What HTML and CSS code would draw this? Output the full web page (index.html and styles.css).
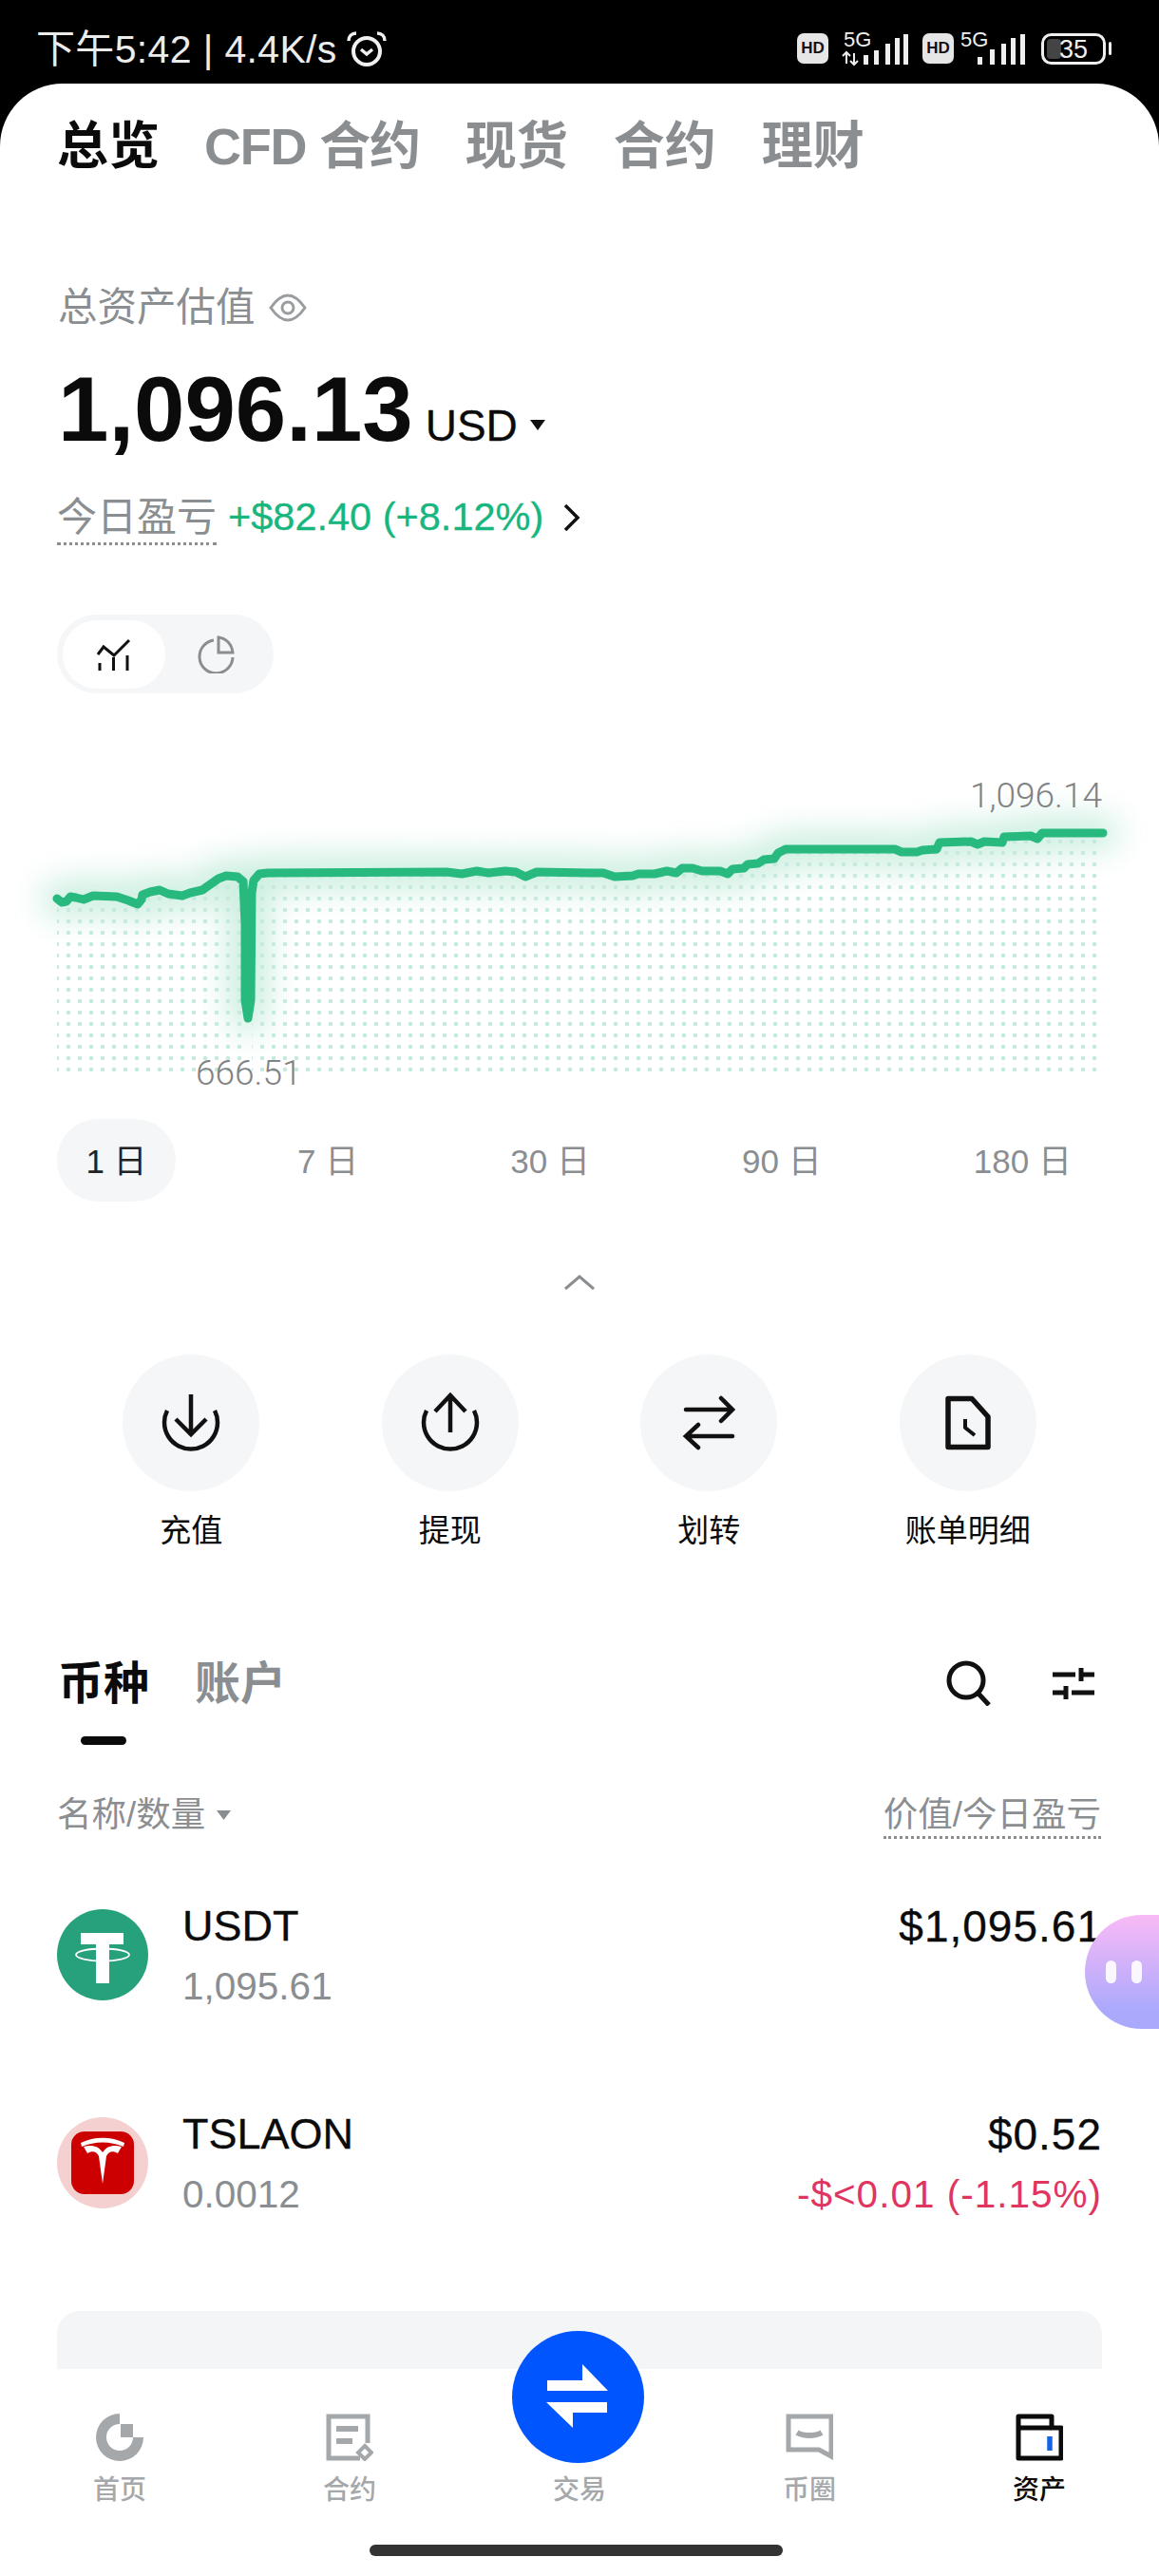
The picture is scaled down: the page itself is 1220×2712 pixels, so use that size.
FILE: index.html
```html
<!DOCTYPE html>
<html lang="zh-CN">
<head>
<meta charset="utf-8">
<title>资产</title>
<link rel="stylesheet" href="styles.css">
</head>
<body>
<header class="status">
  <div class="status-left">
    <span>下午5:42 | 4.4K/s</span>
    <svg class="alarm" viewBox="366 32 42 38" width="42" height="38" fill="none" stroke="#f0f0f0" stroke-width="4">
      <circle cx="387" cy="53" r="14"/>
      <path d="M381 51l6 5 6-5" stroke-width="3.5"/>
      <path d="M368 42c0-5 3-8 8-8M406 42c0-5-3-8-8-8" stroke-width="3.5"/>
    </svg>
  </div>
  <svg class="status-right" viewBox="830 25 350 50" width="350" height="50">
    <rect x="839" y="35" width="33" height="32" rx="7" fill="#e6e6e6"/>
    <text x="855.5" y="56" class="hd">HD</text>
    <text x="888" y="49" class="fiveg">5G</text>
    <path d="M891 56v11M887 59l4-4 4 4M899 67v-11M895 64l4 4 4-4" fill="none" stroke="#eee" stroke-width="2"/>
    <path d="M909 58h5v10h-5zM920 53h5v15h-5zM932 46h5v22h-5zM942 40h5v28h-5zM951 36h5v32h-5z" fill="#efefef"/>
    <rect x="971" y="35" width="33" height="32" rx="7" fill="#e6e6e6"/>
    <text x="987.5" y="56" class="hd">HD</text>
    <text x="1011" y="49" class="fiveg">5G</text>
    <path d="M1029 60h5v8h-5zM1042 52h5v16h-5zM1054 46h5v22h-5zM1064 40h5v28h-5zM1074 36h5v32h-5z" fill="#efefef"/>
    <rect x="1097.500" y="36.500" width="65" height="30" rx="9" fill="none" stroke="#efefef" stroke-width="3"/>
    <rect x="1102" y="41" width="15" height="21" rx="4" fill="#444"/>
    <text x="1130" y="61" class="batt">35</text>
    <rect x="1167" y="44" width="3" height="14" rx="1.500" fill="#efefef"/>
  </svg>
</header>

<main class="app">
  <nav class="tabs">
    <span class="tab tab-on">总览</span>
    <span class="tab tab-cfd">CFD 合约</span>
    <span class="tab">现货</span>
    <span class="tab">合约</span>
    <span class="tab">理财</span>
  </nav>

  <section class="summary">
    <div class="est">
      <span>总资产估值</span>
      <svg viewBox="0 0 40 30" width="40" height="30" fill="none" stroke="#9a9d9f" stroke-width="3">
        <path d="M2 15C9 5 14 2 20 2s11 3 18 13c-7 10-12 13-18 13S9 25 2 15z"/>
        <circle cx="20" cy="15" r="6"/>
      </svg>
    </div>
    <div class="total">
      <span class="total-num">1,096.13</span>
      <span class="total-cur">USD</span>
      <svg class="total-caret" viewBox="0 0 16 11" width="16" height="11"><path d="M0 0h16L8 11z" fill="#111"/></svg>
    </div>
    <div class="pnl">
      <span class="pnl-label">今日盈亏</span>
      <span class="pnl-val">+$82.40 (+8.12%)</span>
      <svg viewBox="0 0 18 28" width="18" height="28" fill="none" stroke="#111" stroke-width="3.500"><path d="M2 1l13 13L2 27"/></svg>
    </div>
  </section>

  <div class="toggle">
    <span class="toggle-on">
      <svg viewBox="0 0 36 34" width="36" height="34" fill="none" stroke="#111" stroke-width="3">
        <path d="M1 17l6-8 11 9L34 2"/>
        <path d="M3 26v8M17.500 20v14M32 18v16"/>
      </svg>
    </span>
    <span class="toggle-off">
      <svg viewBox="0 0 40 40" width="40" height="40" fill="none" stroke="#8b8e91" stroke-width="3">
        <path d="M18 5a17.500 17.500 0 1 0 20 18"/>
        <path d="M23 2c8 1 14 7 15 16H23z"/>
      </svg>
    </span>
  </div>

  <div class="chart">
    <svg class="chart-svg" viewBox="0 730 1220 448" width="1220" height="448">
      <defs>
        <pattern id="dots" patternUnits="userSpaceOnUse" x="54" y="928" width="12" height="12">
          <circle cx="6" cy="6" r="2.300" fill="#c6eadd"/>
        </pattern>
        <clipPath id="below">
          <path d="M60 946L98 943 145 952 158 939 213 937 250 923 256 928 258 1132H265L267 927 282 919 620 919 702 917 758 917 804 905 827 894 942 894 986 894 1022 886 1085 880 1097 877 1158 877V1132H60z"/>
        </clipPath>
        <filter id="blur" filterUnits="userSpaceOnUse" x="0" y="780" width="1220" height="380">
          <feGaussianBlur stdDeviation="17"/>
        </filter>
      </defs>
      <path class="line-glow" filter="url(#blur)" d="M60 946L65 950 70 949 74 944 80 945 88 947 98 943 123 944 135 948 145 952 149 947 150 942 158 939 168 937 177 941 192 943 200 940 213 937 220 932 230 925 238 922 250 923 256 928 258 973 258 1053 261 1072 264 1053 265 940 267 927 273 920 282 919 470 918 486 920 502 917 514 919 532 917 543 918 553 923 565 918 620 919 635 919 647 923 666 922 672 920 689 920 702 917 712 919 718 914 729 914 739 917 758 917 766 920 771 915 783 914 787 910 798 909 804 905 815 904 819 898 827 894 942 894 949 897 965 897 971 895 986 894 989 887 1022 886 1029 889 1036 886 1055 887 1057 881 1085 880 1092 883 1097 877 1161 877"/>
      <rect x="60" y="870" width="1100" height="265" fill="url(#dots)" clip-path="url(#below)"/>
      <path class="line" d="M60 946L65 950 70 949 74 944 80 945 88 947 98 943 123 944 135 948 145 952 149 947 150 942 158 939 168 937 177 941 192 943 200 940 213 937 220 932 230 925 238 922 250 923 256 928 258 973 258 1053 261 1072 264 1053 265 940 267 927 273 920 282 919 470 918 486 920 502 917 514 919 532 917 543 918 553 923 565 918 620 919 635 919 647 923 666 922 672 920 689 920 702 917 712 919 718 914 729 914 739 917 758 917 766 920 771 915 783 914 787 910 798 909 804 905 815 904 819 898 827 894 942 894 949 897 965 897 971 895 986 894 989 887 1022 886 1029 889 1036 886 1055 887 1057 881 1085 880 1092 883 1097 877 1161 877"/>
    </svg>
    <span class="chart-hi">1,096.14</span>
    <span class="chart-lo">666.51</span>
  </div>

  <div class="ranges">
    <span class="range range-on">1 日</span>
    <span class="range">7 日</span>
    <span class="range">30 日</span>
    <span class="range">90 日</span>
    <span class="range">180 日</span>
  </div>

  <div class="collapse">
    <svg viewBox="0 0 32 16" width="32" height="16" fill="none" stroke="#8b8e91" stroke-width="3"><path d="M1 15L16 2l15 13"/></svg>
  </div>

  <div class="actions">
    <div class="action">
      <span class="action-ic">
        <svg viewBox="0 0 64 64" width="64" height="64" fill="none" stroke="#111" stroke-width="4.500">
          <path d="M7 19A28 28 0 1 0 57 19"/>
          <path d="M32 2v40M16 28l16 16 16-16"/>
        </svg>
      </span>
      <span class="action-txt">充值</span>
    </div>
    <div class="action">
      <span class="action-ic">
        <svg viewBox="0 0 64 64" width="64" height="64" fill="none" stroke="#111" stroke-width="4.500">
          <path d="M7 19A28 28 0 1 0 57 19"/>
          <path d="M32 4v38M16 20L32 3l16 17"/>
        </svg>
      </span>
      <span class="action-txt">提现</span>
    </div>
    <div class="action">
      <span class="action-ic">
        <svg viewBox="0 0 64 64" width="64" height="64" fill="none" stroke="#111" stroke-width="4.500" stroke-linecap="round">
          <path d="M8 18h49M45 6l12 12-12 12"/>
          <path d="M57 46H9M21 34L8 46l13 12"/>
        </svg>
      </span>
      <span class="action-txt">划转</span>
    </div>
    <div class="action">
      <span class="action-ic">
        <svg viewBox="0 0 64 64" width="64" height="64" fill="none" stroke="#111" stroke-width="5.500" stroke-linejoin="round">
          <path d="M11 6.500h25l17 19v32H11z"/>
          <path d="M29 28v9l10 8" stroke-width="4"/>
        </svg>
      </span>
      <span class="action-txt">账单明细</span>
    </div>
  </div>

  <div class="coins-head">
    <div class="coin-tabs">
      <div class="coin-tab coin-tab-on">币种<i class="coin-bar"></i></div>
      <div class="coin-tab">账户</div>
    </div>
    <div class="coin-tools">
      <svg viewBox="0 0 48 48" width="48" height="48" fill="none" stroke="#111" stroke-width="5"><circle cx="21" cy="21" r="18"/><path d="M33 34l12 13"/></svg>
      <svg viewBox="0 0 46 36" width="46" height="36" fill="none" stroke="#111" stroke-width="5"><path d="M1 9h24M31 9h14M31 2v14M1 28h14M15 21v14M21 28h24"/></svg>
    </div>
  </div>

  <div class="tbl-head">
    <span class="tbl-sort">名称/数量<svg viewBox="0 0 15 10" width="15" height="10"><path d="M0 0h15L7.500 10z" fill="#8b8e91"/></svg></span>
    <span class="tbl-right">价值/今日盈亏</span>
  </div>

  <div class="rows">
    <div class="row">
      <svg class="coin-ic" viewBox="0 0 96 96" width="96" height="96">
        <circle cx="48" cy="48" r="48" fill="#27a17b"/>
        <path d="M25 25h45v12H55v41H41V37H25z" fill="#fff"/>
        <ellipse cx="48" cy="48" rx="28" ry="6.500" fill="none" stroke="#fff" stroke-width="1.800"/>
      </svg>
      <div class="row-main">
        <div class="row-name">USDT</div>
        <div class="row-sub">1,095.61</div>
      </div>
      <div class="row-val">
        <div class="row-name row-amt">$1,095.61</div>
      </div>
    </div>
    <div class="row">
      <svg class="coin-ic" viewBox="0 0 96 96" width="96" height="96">
        <circle cx="48" cy="48" r="48" fill="#f5d0d0"/>
        <rect x="15" y="15" width="66" height="66" rx="14" fill="#cc0000"/>
        <path d="M25 27c14-7 32-7 46 0l-1 4c-14-6-30-6-44 0z" fill="#fff"/>
        <path d="M28 31c9-2 15-1 20 6 5-7 11-8 20-6l-4 7c-5-3-10-2-12 3l-4 29-4-29c-2-5-7-6-12-3z" fill="#fff"/>
      </svg>
      <div class="row-main">
        <div class="row-name">TSLAON</div>
        <div class="row-sub">0.0012</div>
      </div>
      <div class="row-val">
        <div class="row-name row-amt">$0.52</div>
        <div class="row-sub row-neg">-$&lt;0.01 (-1.15%)</div>
      </div>
    </div>
  </div>

  <div class="card"></div>

  <footer class="nav">
    <div class="nav-grid">
      <div class="nav-item">
        <svg viewBox="0 0 50 50" width="50" height="50" fill="#a5a8aa">
          <path d="M25 0v11a14 14 0 1 0 14 14h11A25 25 0 1 1 25 0z"/>
          <path d="M26 11h13v14H26z"/>
        </svg>
        <span>首页</span>
      </div>
      <div class="nav-item">
        <svg viewBox="0 0 50 50" width="50" height="50" fill="none" stroke="#a5a8aa" stroke-width="5">
          <path d="M44 31V3H3v44h33"/>
          <path d="M11 16h23M11 29h17" stroke-width="6"/>
          <path d="M41 34l7 7-7 7-7-7z" stroke-width="4"/>
        </svg>
        <span>合约</span>
      </div>
      <div class="nav-item nav-trade">
        <span class="trade-btn">
          <svg viewBox="0 0 70 70" width="70" height="70" fill="#fff">
            <path d="M2 17h37V0l27 28H2z"/>
            <path d="M65 40v11H29v16L1 40z"/>
          </svg>
        </span>
        <i class="nav-slot"></i>
        <span>交易</span>
      </div>
      <div class="nav-item">
        <svg viewBox="0 0 50 50" width="50" height="50" fill="none" stroke="#a5a8aa" stroke-width="5">
          <path d="M3 3h45v42l-13-7H3z"/>
          <path d="M12 20c7 4 19 4 26 0" stroke-width="6"/>
        </svg>
        <span>币圈</span>
      </div>
      <div class="nav-item nav-on">
        <svg viewBox="0 0 50 50" width="50" height="50" fill="none" stroke="#0b0b0b" stroke-width="5" stroke-linejoin="round">
          <path d="M3 3h35v12h10v32H3z"/>
          <path d="M3 15h35"/>
          <path d="M36 24v15" stroke="#1463e6" stroke-width="5.500"/>
        </svg>
        <span>资产</span>
      </div>
    </div>
    <div class="home-bar"></div>
  </footer>
</main>

<aside class="bubble"><i></i><i></i></aside>
</body>
</html>
```

FILE: styles.css
```css
* { box-sizing: border-box; }
html, body { margin: 0; padding: 0; }
body {
  position: relative;
  width: 1220px;
  height: 2712px;
  overflow: hidden;
  background: #000;
  color: #0b0b0b;
  font-family: "Liberation Sans", "Noto Sans CJK SC", sans-serif;
}
svg { display: block; flex: none; }

.status {
  height: 88px;
  display: flex;
  justify-content: space-between;
  align-items: flex-start;
  padding-left: 38px;
}
.status-left {
  display: flex;
  align-items: center;
  gap: 10px;
  height: 50px;
  margin-top: 27px;
  color: #ececec;
  font-size: 41px;
  line-height: 50px;
  letter-spacing: .35px;
  white-space: nowrap;
}
.status-right { margin-top: 25px; margin-right: 40px; }
.hd { font: 700 17px "Liberation Sans", sans-serif; fill: #111; text-anchor: middle; }
.fiveg { font: 400 22px "Liberation Sans", sans-serif; fill: #efefef; }
.batt { font: 400 27px "Liberation Sans", sans-serif; fill: #efefef; text-anchor: middle; }

.app {
  height: 2624px;
  background: #fff;
  border-radius: 66px 66px 0 0;
  overflow: hidden;
}

.tabs {
  display: flex;
  gap: 48px;
  padding: 36px 0 0 60px;
  height: 96px;
}
.tab {
  font-size: 54px;
  line-height: 60px;
  font-weight: 700;
  color: #8b8e91;
  white-space: nowrap;
}
.tab-on { color: #0b0b0b; }
.tab-cfd { letter-spacing: -1.2px; margin-left: -1px; }

.summary { padding-left: 61px; margin-top: 115px; }
.est {
  display: flex;
  align-items: center;
  gap: 14px;
  height: 50px;
  font-size: 41.500px;
  line-height: 50px;
  color: #8b8e91;
}
.total {
  display: flex;
  align-items: baseline;
  height: 110px;
  margin-top: 27px;
  line-height: 110px;
}
.total-num { font-size: 96px; font-weight: 700; }
.total-cur { font-size: 46px; margin-left: 13px; -webkit-text-stroke: .3px #0b0b0b; }
.total-caret { align-self: center; margin: 32px 0 0 13px; }
.pnl {
  display: flex;
  align-items: flex-start;
  height: 50px;
  margin-top: 33px;
}
.pnl-label {
  font-size: 42px;
  line-height: 52px;
  color: #8b8e91;
  border-bottom: 3px dotted #8b8e91;
  margin-left: -1px;
}
.pnl-val {
  font-size: 41.500px;
  line-height: 50px;
  color: #17b67f;
  margin-left: 12px;
  -webkit-text-stroke: .3px #17b67f;
}
.pnl svg { margin: 12px 0 0 21px; }

.toggle {
  display: flex;
  align-items: center;
  width: 228px;
  height: 83px;
  margin: 78px 0 0 60px;
  padding-left: 6px;
  background: #f5f6f7;
  border-radius: 42px;
}
.toggle-on {
  display: flex;
  align-items: center;
  justify-content: center;
  width: 108px;
  height: 72px;
  background: #fff;
  border-radius: 36px;
}
.toggle-off {
  display: flex;
  justify-content: center;
  width: 100px;
  margin-left: 3px;
}

.chart { position: relative; height: 448px; }
.chart-svg { width: 1220px; height: 448px; }
.line, .line-glow {
  fill: none;
  stroke-linecap: round;
  stroke-linejoin: round;
}
.line { stroke: #27b97d; stroke-width: 9px; }
.line-glow { stroke: #27b97d; stroke-width: 34px; opacity: .26; }
.chart-hi, .chart-lo {
  position: absolute;
  font-family: Roboto, "Liberation Sans", sans-serif;
  font-weight: 300;
  font-size: 37px;
  line-height: 40px;
  color: #808284;
}
.chart-hi { right: 60px; top: 88px; }
.chart-lo { left: 206px; top: 380px; }

.ranges {
  display: flex;
  justify-content: space-between;
  padding: 0 60px;
  height: 87px;
}
.range {
  padding: 2px 32px 0;
  font-size: 35px;
  line-height: 85px;
  color: #8b8e91;
  white-space: nowrap;
}
.range-on {
  width: 125px;
  padding: 2px 0 0;
  text-align: center;
  color: #222;
  background: #f5f6f7;
  border-radius: 44px;
}

.collapse { display: flex; justify-content: center; margin-top: 77px; height: 16px; }

.actions {
  display: grid;
  grid-template-columns: repeat(4, 1fr);
  padding: 0 65px;
  margin-top: 68px;
}
.action { display: flex; flex-direction: column; align-items: center; }
.action-ic {
  display: flex;
  align-items: center;
  justify-content: center;
  width: 144px;
  height: 144px;
  border-radius: 50%;
  background: #f5f6f7;
}
.action-txt {
  margin-top: 22px;
  font-size: 33px;
  line-height: 40px;
  color: #0b0b0b;
}

.coins-head {
  display: flex;
  justify-content: space-between;
  padding: 0 67px 0 61px;
  margin-top: 110px;
  height: 95px;
}
.coin-tabs { display: flex; gap: 48px; }
.coin-tab {
  display: flex;
  flex-direction: column;
  align-items: center;
  padding-top: 1px;
  font-size: 48px;
  line-height: 60px;
  font-weight: 700;
  color: #8b8e91;
}
.coin-tab-on { color: #0b0b0b; }
.coin-bar {
  display: block;
  width: 48px;
  height: 9px;
  margin-top: 25px;
  background: #0b0b0b;
  border-radius: 5px;
}
.coin-tools { display: flex; align-items: flex-start; gap: 63px; padding-top: 6px; }
.coin-tools svg + svg { margin-top: 6px; }

.tbl-head {
  display: flex;
  justify-content: space-between;
  align-items: flex-start;
  padding: 0 61px 0 60px;
  margin-top: 52px;
  height: 44px;
  font-size: 36.500px;
  line-height: 44px;
  color: #8b8e91;
}
.tbl-sort { display: flex; align-items: center; gap: 12px; }
.tbl-right { border-bottom: 3px dotted #8b8e91; height: 47px; }

.rows { display: flex; flex-direction: column; gap: 107px; margin-top: 69px; padding: 0 60px; }
.row { display: flex; align-items: center; height: 112px; }
.coin-ic { margin-right: 36px; }
.row-main { flex: 1; }
.row-val { text-align: right; align-self: flex-start; }
.row-name { font-size: 45px; line-height: 52px; color: #0b0b0b; -webkit-text-stroke: .3px #0b0b0b; }
.row-amt { font-size: 46px; letter-spacing: 1px; }
.row-sub { margin-top: 14px; font-size: 40.500px; line-height: 46px; color: #8b8e91; }
.row-neg { color: #e0355f; letter-spacing: 1px; }

.card {
  height: 61px;
  margin: 100px 60px 0;
  background: #f4f5f6;
  border-radius: 24px 24px 0 0;
}

.nav { height: 218px; padding-top: 47px; background: #fff; }
.nav-grid { display: grid; grid-template-columns: repeat(5, 1fr); padding: 0 5px; }
.nav-item {
  position: relative;
  display: flex;
  flex-direction: column;
  align-items: center;
  font-size: 28px;
  line-height: 36px;
  font-weight: 500;
  color: #a5a8aa;
}
.nav-item > span:last-child { margin-top: 13px; }
.nav-on { color: #0b0b0b; }
.nav-slot { display: block; height: 50px; }
.trade-btn {
  position: absolute;
  top: -87px;
  left: 50%;
  display: flex;
  align-items: center;
  justify-content: center;
  width: 139px;
  height: 139px;
  margin-left: -71px;
  border-radius: 50%;
  background: #0055ff;
}
.home-bar {
  width: 435px;
  height: 12px;
  margin: 39px 0 0 389px;
  background: #333;
  border-radius: 6px;
}

.bubble {
  position: absolute;
  right: 0;
  top: 2016px;
  display: flex;
  align-items: center;
  gap: 16px;
  width: 78px;
  height: 120px;
  padding-left: 22px;
  background: linear-gradient(180deg, #f9baf6 0%, #aaa9fc 85%);
  border-radius: 60px 0 0 60px;
}
.bubble i {
  display: block;
  width: 11px;
  height: 24px;
  background: #fff;
  opacity: .9;
  border-radius: 6px;
}
```
